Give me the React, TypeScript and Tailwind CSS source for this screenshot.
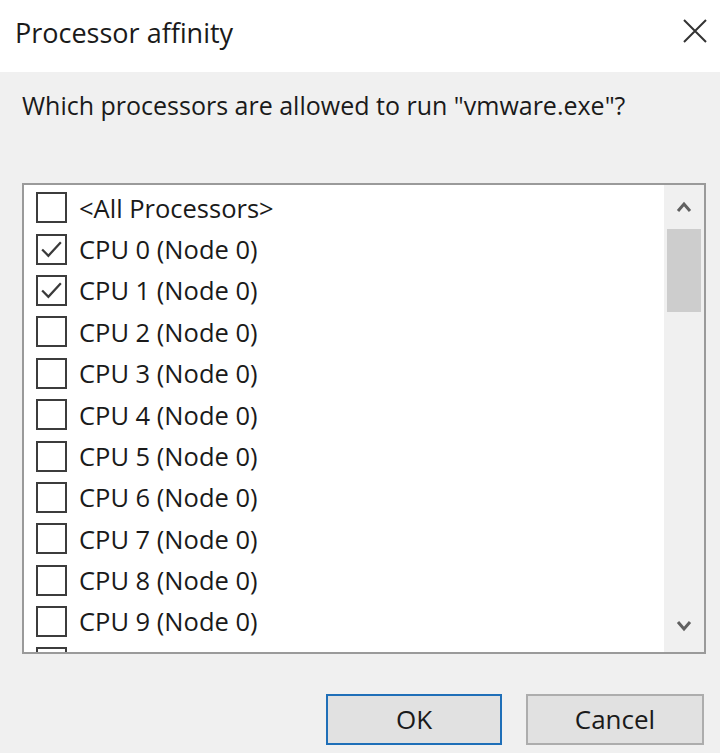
import React from "react";

const rows = [
  { label: "<All Processors>", checked: false },
  ...Array.from({ length: 10 }, (_, i) => ({
    label: `CPU ${i} (Node 0)`,
    checked: i < 2,
  })),
];

const Checkbox = ({ checked }: { checked: boolean }) => (
  <div className="w-[31px] h-[31px] shrink-0 border-[2.5px] border-[#3c3c3c] bg-white">
    {checked && (
      <svg viewBox="0 0 26 26" className="w-full h-full">
        <polyline
          points="4,13 10,19 22,6"
          fill="none"
          stroke="#3a3a3a"
          strokeWidth="2.2"
        />
      </svg>
    )}
  </div>
);

export default function App() {
  return (
    <div
      className="w-[720px] h-[753px] bg-[#f0f0f0] flex flex-col text-[#1a1a1a] overflow-hidden"
      style={{ fontFamily: '"Open Sans", "Noto Sans", sans-serif' }}
    >
      {/* Title bar */}
      <div className="h-[72px] bg-white flex items-center justify-between pl-[15px] pr-[12px] shrink-0">
        <span className="text-[27px] pb-[6px]">Processor affinity</span>
        <svg width="26" height="26" viewBox="0 0 26 26" className="mb-[10px]">
          <path d="M2 2 L24 24 M24 2 L2 24" stroke="#333" strokeWidth="2" />
        </svg>
      </div>

      <div className="px-[22px] pt-[18px]">
        <p className="text-[25px] leading-[30px] whitespace-nowrap">
          Which processors are allowed to run "vmware.exe"?
        </p>
      </div>

      {/* List box */}
      <div className="mt-[63px] ml-[22px] w-[684px] h-[471px] border-2 border-[#9a9a9a] bg-white flex shrink-0">
        <div className="flex-1 overflow-hidden pt-[2px]">
          {rows.map((r) => (
            <div key={r.label} className="h-[41.4px] flex items-center pl-[12px] gap-[12px]">
              <Checkbox checked={r.checked} />
              <span className="text-[25.5px] whitespace-nowrap">{r.label}</span>
            </div>
          ))}
          {/* partially visible next row */}
          <div className="h-[41.4px] flex items-center pl-[12px]">
            <Checkbox checked={false} />
          </div>
        </div>
        <div className="w-[40px] bg-[#f0f0f0] flex flex-col items-center">
          <div className="h-[44px] flex items-center justify-center">
            <svg width="16" height="12" viewBox="0 0 16 12">
              <polyline points="2,10 8,3 14,10" fill="none" stroke="#606060" strokeWidth="3" />
            </svg>
          </div>
          <div className="w-[34px] h-[83px] bg-[#cdcdcd]" />
          <div className="flex-1" />
          <div className="h-[44px] flex items-center justify-center mb-[4px]">
            <svg width="16" height="12" viewBox="0 0 16 12">
              <polyline points="2,2 8,9 14,2" fill="none" stroke="#606060" strokeWidth="3" />
            </svg>
          </div>
        </div>
      </div>

      {/* Buttons */}
      <div className="flex justify-end gap-[24px] pr-[16px] mt-[40px]">
        <button className="w-[176px] h-[51px] bg-[#e1e1e1] border-2 border-[#1f6fb8] text-[26px]">
          OK
        </button>
        <button className="w-[178px] h-[51px] bg-[#e1e1e1] border-2 border-[#adadad] text-[26px]">
          Cancel
        </button>
      </div>
    </div>
  );
}
